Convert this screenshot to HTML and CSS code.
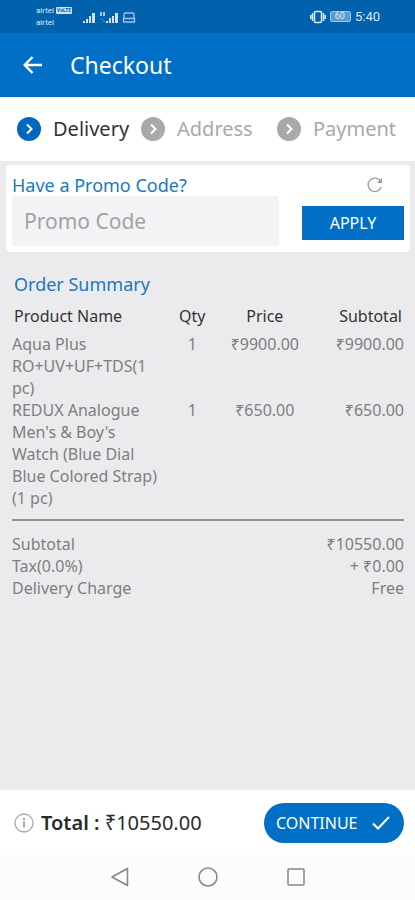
FILE: index.html
```html
<!DOCTYPE html>
<html lang="en">
<head>
<meta charset="utf-8">
<meta name="viewport" content="width=device-width, initial-scale=1">
<title>Checkout</title>
<link rel="stylesheet" href="styles.css">
</head>
<body>
<div class="status">
  <div class="carriers"><span>airtel <b class="volte">VoLTE</b></span><span>airtel</span></div>
  <svg class="signals" width="54" height="16" viewBox="0 0 54 16" fill="#cfe3f5" aria-hidden="true">
    <path d="M1 12h2v2H1zM4 10h2v4H4zM7 7h2v7H7zM10 4h3v10h-3z"/>
    <path d="M18 3h2v4h-2zM21 3h2v4h-2z" opacity=".8"/>
    <path d="M19 10h2v1h-2zM21 12h2v1h-2z" opacity=".4"/>
    <path d="M24 12h2v2h-2zM27 9h2v5h-2zM30 7h2v7h-2zM33 4h3v10h-3z"/>
    <path d="M42 9V5.500q0-1.500 1.500-1.500h7q1.500 0 1.500 1.500V9M41.500 9.500h11V13h-11z" fill="none" stroke="#9fc4e6" stroke-width="1.300"/>
  </svg>
  <div class="status-right">
    <svg width="16" height="14" viewBox="0 0 16 14" fill="none" stroke="#dcebf8" stroke-width="1.500" aria-hidden="true"><rect x="4.500" y="1.500" width="7" height="11" rx="1"/><path d="M2.500 3v8M.7 5v4M13.500 3v8M15.300 5v4"/></svg>
    <span class="battery">60</span>
    <span class="clock">5:40</span>
  </div>
</div>
<header class="appbar">
  <button class="back" aria-label="Back"><svg width="20" height="20" viewBox="0 0 20 20" fill="none" stroke="#fff" stroke-width="2.400"><path d="M19 10H2M9.500 2L1.700 10l7.800 8"/></svg></button>
  <h1>Checkout</h1>
</header>
<ol class="steps">
  <li class="active"><svg width="24" height="24" viewBox="0 0 24 24"><circle cx="12" cy="12" r="12" fill="currentColor"/><path d="M10 7.500l4.500 4.500-4.500 4.500" fill="none" stroke="#fff" stroke-width="2"/></svg><span>Delivery</span></li>
  <li><svg width="24" height="24" viewBox="0 0 24 24"><circle cx="12" cy="12" r="12" fill="currentColor"/><path d="M10 7.500l4.500 4.500-4.500 4.500" fill="none" stroke="#fff" stroke-width="2"/></svg><span>Address</span></li>
  <li><svg width="24" height="24" viewBox="0 0 24 24"><circle cx="12" cy="12" r="12" fill="currentColor"/><path d="M10 7.500l4.500 4.500-4.500 4.500" fill="none" stroke="#fff" stroke-width="2"/></svg><span>Payment</span></li>
</ol>
<main>
  <form class="promo">
    <div class="promo-head">
      <label for="promo">Have a Promo Code?</label>
      <button type="button" class="refresh" aria-label="Refresh"><svg width="16" height="16" viewBox="0 0 16 16" fill="none" stroke="#9a9a9a" stroke-width="1.300"><path d="M14.200 10A6.700 6.700 0 1 1 13.500 4.200"/><path d="M15 1v5h-5z" fill="#9a9a9a" stroke="none"/></svg></button>
    </div>
    <div class="promo-row">
      <input id="promo" type="text" placeholder="Promo Code">
      <button type="button" class="apply">APPLY</button>
    </div>
  </form>
  <section class="summary">
    <h2>Order Summary</h2>
    <table>
      <thead><tr><th class="name">Product Name</th><th class="qty">Qty</th><th class="price">Price</th><th class="sub">Subtotal</th></tr></thead>
      <tbody>
        <tr><td class="name">Aqua Plus RO+UV+UF+TDS(1 pc)</td><td class="qty">1</td><td class="price">₹9900.00</td><td class="sub">₹9900.00</td></tr>
        <tr><td class="name">REDUX Analogue Men's &amp; Boy's Watch (Blue Dial Blue Colored Strap)<wbr>(1 pc)</td><td class="qty">1</td><td class="price">₹650.00</td><td class="sub">₹650.00</td></tr>
      </tbody>
    </table>
    <dl>
      <div><dt>Subtotal</dt><dd>₹10550.00</dd></div>
      <div><dt>Tax(0.0%)</dt><dd>+ ₹0.00</dd></div>
      <div><dt>Delivery Charge</dt><dd>Free</dd></div>
    </dl>
  </section>
</main>
<footer class="total">
  <svg width="20" height="20" viewBox="0 0 20 20" fill="none" stroke="#a8a8a8" stroke-width="1.300" aria-hidden="true"><circle cx="10" cy="10" r="9"/><path d="M10 8.500v6M10 5v2" stroke-width="2"/></svg>
  <p><strong>Total :</strong> ₹10550.00</p>
  <button class="continue">CONTINUE<svg width="18" height="14" viewBox="0 0 18 14" fill="none" stroke="#fff" stroke-width="2" aria-hidden="true"><path d="M1 7.500l5 5L17 1"/></svg></button>
</footer>
<nav class="sysnav">
  <button aria-label="Back"><svg width="20" height="20" viewBox="0 0 20 20"><path d="M17.500 1.500v17L2 10z" stroke-linejoin="round"/></svg></button>
  <button aria-label="Home"><svg width="20" height="20" viewBox="0 0 20 20"><circle cx="10" cy="10" r="9"/></svg></button>
  <button aria-label="Recent apps"><svg width="20" height="20" viewBox="0 0 20 20"><rect x="2" y="2" width="16" height="16" rx="1"/></svg></button>
</nav>
</body>
</html>
```
FILE: styles.css
```css
* { box-sizing: border-box; }
body {
  margin: 0;
  min-height: 100vh;
  display: flex;
  flex-direction: column;
  background: #ebebed;
  color: #7e7e80;
  font: 16px/22px "Noto Sans", "Open Sans", sans-serif;
}
button { border: 0; padding: 0; background: none; font: inherit; color: inherit; }
svg { display: block; flex: none; }
h1, h2, p, ol, dl, dd { margin: 0; padding: 0; font-weight: 400; }

.status {
  display: flex;
  align-items: center;
  height: 33px;
  padding: 0 35px 0 36px;
  background: #0061ac;
  color: #dcebf8;
}
.carriers { display: flex; flex-direction: column; width: 46px; font: 8px/12px Roboto, sans-serif; white-space: nowrap; }
.volte { display: inline-block; padding: 0 1px; border-radius: 1px; background: #cfe3f5; color: #0061ac; font-size: 5px; line-height: 7px; vertical-align: 1px; }
.status-right { display: flex; align-items: center; gap: 4px; margin-left: auto; font-family: Roboto, sans-serif; }
.battery { padding: 0 5px 0 4px; border: 1px solid #9fc4e6; border-radius: 2px; background: #5b9bd0; font-size: 9px; line-height: 9px; }
.clock { font-size: 13px; line-height: 16px; }

.appbar { display: flex; align-items: center; gap: 27px; height: 64px; padding: 0 23px; background: #006fc5; color: #fff; }
.appbar h1 { font-size: 23px; line-height: 32px; }

.steps {
  display: grid;
  grid-template-columns: 124fr 136fr 138fr;
  align-items: center;
  height: 64px;
  padding-left: 17px;
  background: #fff;
  color: #a9a9ab;
  font-size: 20px;
  line-height: 28px;
  list-style: none;
}
.steps li { display: flex; align-items: center; gap: 12px; }
.steps .active { color: #0068bd; }
.steps .active span { color: #333; }

main { flex: 1; }
.promo { margin: 4px 5px 0 6px; padding: 8px 6px 6px; border-radius: 4px; background: #fff; }
.promo-head { display: flex; justify-content: space-between; align-items: center; height: 23px; padding-right: 21px; color: #1c78bb; font-size: 18px; }
.promo-row { display: flex; align-items: flex-end; gap: 23px; }
.promo input { flex: 1; min-width: 0; height: 50px; padding: 0 12px; border: 0; border-radius: 4px; background: #f2f3f5; color: #333; font: inherit; font-size: 21px; }
.promo input::placeholder { color: #a3a3a5; opacity: 1; }
.apply { width: 102px; height: 34px; margin-bottom: 6px; background: #006fc5; color: #fff; }

.summary { padding: 20px 11px 0 12px; }
.summary h2 { padding: 0 2px; color: #1c78bb; font-size: 18px; line-height: 24px; }
table { width: 100%; table-layout: fixed; border-collapse: collapse; }
th, td { padding: 0; text-align: left; vertical-align: top; font-weight: 400; }
th { padding: 9px 2px 6px; color: #333; }
th.name { width: 40%; }
td.name { padding-right: 7px; }
th.qty { width: 12%; }
th.price { width: 25%; }
.qty, .price { text-align: center; }
.sub { text-align: right; }
dl { margin-top: 10px; padding-top: 12px; border-top: 2px solid #929294; }
dl div { display: flex; justify-content: space-between; }

.total { display: flex; align-items: center; gap: 7px; height: 65px; padding: 0 11px 0 14px; background: #fff; color: #2b2b2b; }
.total p { flex: 1; font-size: 20px; line-height: 28px; white-space: nowrap; }
.total strong { font-weight: 600; }
.continue { display: flex; align-items: center; justify-content: space-between; width: 140px; height: 40px; padding: 0 14px 0 12px; border-radius: 20px; background: #006fc5; color: #fff; }

.sysnav { display: flex; justify-content: center; gap: 68px; height: 45px; padding-bottom: 1px; background: #fcfcfc; }
.sysnav svg { fill: none; stroke: #858585; stroke-width: 1.5; }
```
